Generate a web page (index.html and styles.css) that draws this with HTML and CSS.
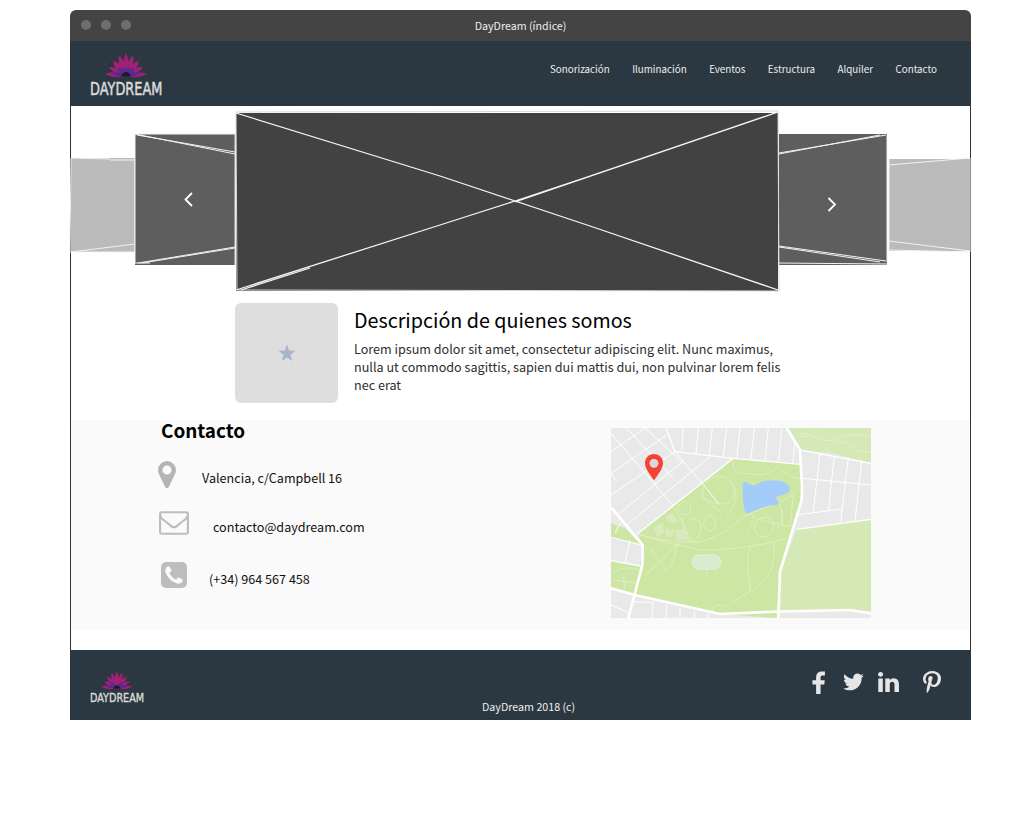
FILE: index.html
```html
<!DOCTYPE html>
<html lang="es">
<head>
<meta charset="utf-8">
<title>DayDream (índice)</title>
<link rel="stylesheet" href="styles.css">
</head>
<body>
<div class="window">
  <div class="titlebar">
    <div class="dots"><span class="dot"></span><span class="dot"></span><span class="dot"></span></div>
    <div class="title">DayDream (índice)</div>
  </div>
  <header class="navbar">
    <svg class="logo" viewBox="0 0 75 56" width="75" height="56">
      <g fill="#3a2a55"><circle cx="36" cy="3" r=".6"/><circle cx="27" cy="8" r=".6"/><circle cx="46" cy="8" r=".6"/><circle cx="16" cy="15" r=".6"/><circle cx="57" cy="14" r=".6"/><circle cx="10" cy="21" r=".6"/><circle cx="62" cy="20" r=".6"/><circle cx="13" cy="9" r=".5"/><circle cx="52" cy="6" r=".5"/><circle cx="20" cy="4" r=".4"/><circle cx="40" cy="1" r=".5"/></g>
      <g fill="#8c2a66"><circle cx="7" cy="20" r=".6"/><circle cx="66" cy="19" r=".6"/><circle cx="15" cy="19" r=".6"/><circle cx="58" cy="18" r=".6"/><circle cx="20" cy="12" r=".6"/><circle cx="51" cy="11" r=".6"/><circle cx="3" cy="21" r=".5"/><circle cx="70" cy="21" r=".5"/></g>
      <g fill="#a41f76">
        <path transform="translate(36 31) rotate(-84)" d="M0 0C-3-8-3-15 0-21C3-15 3-8 0 0Z"/>
        <path transform="translate(36 31) rotate(84)" d="M0 0C-3-8-3-15 0-21C3-15 3-8 0 0Z"/>
        <path transform="translate(36 31) rotate(-62)" d="M0 0C-3-8-3-15 0-19C3-15 3-8 0 0Z"/>
        <path transform="translate(36 31) rotate(62)" d="M0 0C-3-8-3-15 0-19C3-15 3-8 0 0Z"/>
        <path transform="translate(36 31) rotate(-40)" d="M0 0C-3.500-8-3.500-15 0-20C3.500-15 3.500-8 0 0Z"/>
        <path transform="translate(36 31) rotate(40)" d="M0 0C-3.500-8-3.500-15 0-20C3.500-15 3.500-8 0 0Z"/>
        <path transform="translate(36 31) rotate(-19)" d="M0 0C-3.500-8-3.500-15 0-22C3.500-15 3.500-8 0 0Z"/>
        <path transform="translate(36 31) rotate(19)" d="M0 0C-3.500-8-3.500-15 0-22C3.500-15 3.500-8 0 0Z"/>
        <path transform="translate(36 31)" d="M0 0C-3.500-8-3.500-15 0-23C3.500-15 3.500-8 0 0Z"/>
      </g>
      <g fill="#5b2a8c">
        <path transform="translate(36 31) rotate(-76)" d="M0 0C-3-5-3-10 0-16C3-10 3-5 0 0Z"/>
        <path transform="translate(36 31) rotate(76)" d="M0 0C-3-5-3-10 0-16C3-10 3-5 0 0Z"/>
        <path transform="translate(36 31) rotate(-45)" d="M0 0C-3-5-3-8 0-12C3-8 3-5 0 0Z"/>
        <path transform="translate(36 31) rotate(45)" d="M0 0C-3-5-3-8 0-12C3-8 3-5 0 0Z"/>
        <path transform="translate(36 31) rotate(-15)" d="M0 0C-2.500-4-2.500-7 0-10C2.500-7 2.500-4 0 0Z"/>
        <path transform="translate(36 31) rotate(15)" d="M0 0C-2.500-4-2.500-7 0-10C2.500-7 2.500-4 0 0Z"/>
      </g>
      <path fill="#1d1a2b" d="M31 31.500C32 28.500 34 27 36 27C38 27 40 28.500 41 31.500Z"/>
      <text class="logo-text" transform="translate(0 49.500) scale(.76 1)">DAYDREAM</text>
    </svg>
    <nav class="menu">
      <a class="menu-item">Sonorización</a>
      <a class="menu-item">Iluminación</a>
      <a class="menu-item">Eventos</a>
      <a class="menu-item">Estructura</a>
      <a class="menu-item">Alquiler</a>
      <a class="menu-item">Contacto</a>
    </nav>
  </header>
  <main class="content">
    <svg class="carousel" viewBox="71 106 899 190" width="899" height="190">
      <rect x="71" y="158" width="64" height="94" fill="#bbbbbb"/>
      <path class="sketch" d="M71 158L110 159M110 160L135 160M71 158L70 252L135 252M71 252L135 244M135 160L135 252"/>
      <rect x="135" y="134" width="100" height="131" fill="#5e5e5e"/>
      <path class="sketch" d="M135 134L135 263L150 263M135 134L235 134M137 135L235 152M135 134L235 154M138 263L235 247M142 263L235 248"/>
      <rect x="779" y="134" width="108" height="131" fill="#5e5e5e"/>
      <path class="sketch" d="M887 135L887 262M779 263L887 264M779 153L886 135M779 154L880 135M779 246L886 261M779 247L880 262"/>
      <rect x="889" y="159" width="81" height="92" fill="#bbbbbb"/>
      <path class="sketch" d="M889 165L970 158M889 241L970 251M889 159L889 250L970 252M971 158L971 252"/>
      <rect x="236" y="113" width="542" height="178" fill="#424242"/>
      <path class="frame" d="M236 112L778 111L779 291L237 290ZM235 134L235 265"/>
      <path class="cross" d="M236 113L440 176L590 226L778 290M236 290L440 225L515 201L590 176L778 112M241 290L310 268M515 202L772 114"/>
      <path class="chevron" d="M192 193L185.500 199.500L192 206"/>
      <path class="chevron" d="M828.500 198L835 204.500L828.500 211"/>
    </svg>
    <section class="about">
      <div class="thumb">
        <svg viewBox="0 0 18 18" width="18" height="18"><path fill="#a9b4cc" d="M9 .5L11.200 6.500L17.500 6.800L12.500 10.700L14.300 17L9 13.400L3.700 17L5.500 10.700L.5 6.800L6.800 6.500Z"/></svg>
      </div>
      <div class="about-text">
        <h2 class="about-title">Descripción de quienes somos</h2>
        <p class="about-body">Lorem ipsum dolor sit amet, consectetur adipiscing elit. Nunc maximus, nulla ut commodo sagittis, sapien dui mattis dui, non pulvinar lorem felis nec erat</p>
      </div>
    </section>
    <section class="contact">
      <div class="contact-info">
        <h2 class="contact-title">Contacto</h2>
        <div class="row row-place">
          <svg class="icon" viewBox="384 128 1024 1536" width="18" height="27"><path fill="#b5b5b5" d="M1152 640q0-106-75-181t-181-75-181 75-75 181 75 181 181 75 181-75 75-181zm256 0q0 109-33 179l-364 774q-16 33-47.500 52t-67.500 19-67.500-19-46.500-52l-365-774q-33-70-33-179 0-212 150-362t362-150 362 150 150 362z"/></svg>
          <span class="row-text">Valencia, c/Campbell 16</span>
        </div>
        <div class="row row-mail">
          <svg class="icon" viewBox="0 256 1792 1408" width="30" height="24"><path fill="#bdbdbd" d="M1664 1504v-768q-32 36-69 66-268 206-426 338-51 43-83 67t-86.500 48.500-102.500 24.500h-2q-48 0-102.500-24.500t-86.500-48.500-83-67q-158-132-426-338-37-30-69-66v768q0 13 9.500 22.500t22.500 9.500h1472q13 0 22.500-9.500t9.500-22.500zm0-1051v-24.500l-.5-13-3-12.500-5.500-9-9-7.500-14-2.500h-1472q-13 0-22.500 9.500t-9.500 22.500q0 168 147 284 193 152 401 317 6 5 35 29.500t46 37.500 44.500 31.500 50.500 27.500 43 9h2q20 0 43-9t50.500-27.500 44.500-31.500 46-37.500 35-29.500q208-165 401-317 54-43 100.500-115.500t46.500-131.500zm128-37v1088q0 66-47 113t-113 47h-1472q-66 0-113-47t-47-113v-1088q0-66 47-113t113-47h1472q66 0 113 47t47 113z"/></svg>
          <span class="row-text">contacto@daydream.com</span>
        </div>
        <div class="row row-phone">
          <svg class="icon" viewBox="128 128 1536 1536" width="26" height="26"><path fill="#bdbdbd" d="M1408 1193q0-11-2-16t-18-16.500-40.500-25-47.500-26.500-45.500-25-28.500-15q-5-3-19-13t-25-15-21-5q-15 0-36.500 20.500t-39.500 45-38.500 45-33.500 20.500q-7 0-16.500-3.500t-15.500-6.500-17-9.500-14-8.500q-99-55-170-126.500t-127-170.500q-2-3-8.500-14t-9.500-17-6.500-15.500-3.500-16.500q0-13 20.500-33.500t45-38.500 45-39.500 20.500-36.500q0-10-5-21t-15-25-13-19q-3-6-15-28.500t-25-45.500-26.500-47.500-25-40.500-16.500-18-16-2q-48 0-101 22-46 21-80 94.500t-34 130.500q0 16 2.500 34t5 30.500 9 33 10 29.500 12.500 33 11 30q60 164 216.500 320.500t320.500 216.500q6 2 30 11t33 12.500 29.500 10 33 9 30.500 5 34 2.500q57 0 130.500-34t94.500-80q22-53 22-101zm256-777v960q0 119-84.500 203.500t-203.500 84.500h-960q-119 0-203.500-84.500t-84.500-203.500v-960q0-119 84.500-203.500t203.500-84.500h960q119 0 203.500 84.500t84.500 203.500z"/></svg>
          <span class="row-text">(+34) 964 567 458</span>
        </div>
      </div>
      <svg class="map" viewBox="33 24 780 570" width="260" height="190">
        <rect x="33" y="24" width="780" height="570" fill="#e9e9e9"/>
        <path fill="#cde6a3" d="M403 115L600 133L606 240L540 455L530 594L360 582L105 525L130 375L112 342Z"/>
        <path fill="#d5e9b6" d="M590 328L813 298V575L540 572L540 460Z"/>
        <path fill="#d5e9b6" d="M565 24H813V130L700 100L605 90Z"/>
        <path fill="#cde6a3" d="M33 310L75 325L125 375L33 350ZM33 422L122 438L100 525L33 505Z"/>
        <g class="road-thin">
          <path d="M250 24L245 95M295 24L288 100M337 24L327 110M380 24L370 108M420 24L410 113M463 24L452 122M505 24L495 126M545 30L535 128M585 70L578 130"/>
          <path d="M660 100L640 275M703 108L685 272M745 112L722 305M785 120L765 302"/>
          <path d="M610 175L813 195"/>
          <path d="M590 285L725 267"/>
          <path d="M33 95L135 24M33 160L200 45M33 225L225 95M52 285L248 125M80 315L330 110"/>
          <path d="M80 24L220 175M135 24L250 130M33 40L220 258M33 160L50 185"/>
          <path d="M225 95L315 200L355 250"/>
          <path d="M90 360L75 430M33 352L125 375M45 340L60 310"/>
          <path d="M160 545L155 594M200 555L198 594M240 565L240 594M283 573L283 594M325 580V594M33 555L90 580M95 545L160 548"/>
        </g>
        <g class="park-line">
          <path d="M403 115C390 160 420 160 440 160C480 170 520 160 540 135M540 150C560 160 590 180 600 175"/>
          <path d="M112 342C180 360 240 370 300 365C370 350 400 310 440 285C490 265 540 250 580 225M112 342L210 370L300 390C380 390 480 380 560 355"/>
          <path d="M355 168C390 170 410 200 400 235C380 260 330 255 310 230C300 200 330 170 355 168ZM463 320C465 300 490 285 510 295C525 310 525 335 500 350C480 355 463 340 463 320Z"/>
          <path d="M320 290C340 275 350 300 345 320C335 345 310 330 310 310ZM250 245C275 240 280 270 260 285C230 285 225 255 250 245ZM265 300C300 280 320 330 280 365"/>
          <path d="M440 340C460 300 470 280 450 285M520 365C530 420 515 470 460 510C420 530 410 540 395 545M450 385C435 430 450 480 450 510M235 370C220 410 220 440 200 450M135 465C180 430 210 390 235 370M150 385L200 452M320 450V470"/>
          <path d="M335 575C340 555 350 552 378 558M580 225L570 320M540 250C550 290 550 310 530 325M225 265L275 365M245 290L265 360"/>
          <path d="M600 40C640 40 660 70 700 60C740 40 780 40 813 50M650 24C640 50 610 60 590 40M680 90C680 65 720 60 740 70C760 90 790 100 813 95"/>
          <path d="M40 460C60 440 90 440 120 450M40 480L110 490M70 470L75 510"/>
          <path d="M400 200C420 230 400 270 380 285M345 260L365 280M300 225L345 265M460 290C500 310 540 310 570 320M545 270L548 320"/>
        </g>
        <path fill="#a3ccfb" d="M428 190C432 178 445 190 460 197C480 190 490 178 515 182C540 180 565 185 570 210C565 225 545 222 528 232C530 242 545 250 530 255C500 255 465 270 445 280C430 280 428 250 428 190Z"/>
        <path fill="#dbead2" stroke="#eef4e2" stroke-width="2" d="M300 405H340C370 405 370 448 340 448H300C268 448 268 405 300 405Z"/>
        <path fill="#d9eabf" d="M160 325L188 308L192 340L172 352ZM196 292L216 280L236 305L210 310ZM196 325L224 330L215 352L196 345ZM228 330L256 325L260 362L226 360Z"/>
        <g class="road-main">
          <path d="M560 24L600 90L606 200L605 240L540 455L535 594"/>
          <path d="M600 90L813 130" class="road-mid"/>
          <path d="M225 95L400 115L600 133" class="road-mid"/>
          <path d="M198 24L225 95" class="road-mid"/>
          <path d="M33 262L128 375L127 435L85 594"/>
          <path d="M33 505L105 525L360 582L530 575L750 570L813 580"/>
          <path d="M112 342L400 115" class="road-mid"/>
          <path d="M590 328L813 298" class="road-mid"/>
          <path d="M33 422L122 438" class="road-mid"/>
        </g>
        <path fill="#f44336" fill-rule="evenodd" d="M162 102C146 102 135 114 135 130C135 145 150 165 162 181C174 165 189 145 189 130C189 114 178 102 162 102ZM162 118C169 118 175 123 175 130C175 137 169 142 162 142C155 142 149 137 149 130C149 123 155 118 162 118Z"/>
        <circle cx="162" cy="130" r="13" fill="#d8d8d8"/>
      </svg>
    </section>
  </main>
  <footer class="footer">
    <svg class="logo-small" viewBox="0 0 75 56" width="56" height="42">
      <g fill="#a41f76">
        <path transform="translate(36 31) rotate(-84)" d="M0 0C-3-8-3-15 0-21C3-15 3-8 0 0Z"/>
        <path transform="translate(36 31) rotate(84)" d="M0 0C-3-8-3-15 0-21C3-15 3-8 0 0Z"/>
        <path transform="translate(36 31) rotate(-62)" d="M0 0C-3-8-3-15 0-19C3-15 3-8 0 0Z"/>
        <path transform="translate(36 31) rotate(62)" d="M0 0C-3-8-3-15 0-19C3-15 3-8 0 0Z"/>
        <path transform="translate(36 31) rotate(-40)" d="M0 0C-3.500-8-3.500-15 0-20C3.500-15 3.500-8 0 0Z"/>
        <path transform="translate(36 31) rotate(40)" d="M0 0C-3.500-8-3.500-15 0-20C3.500-15 3.500-8 0 0Z"/>
        <path transform="translate(36 31) rotate(-19)" d="M0 0C-3.500-8-3.500-15 0-22C3.500-15 3.500-8 0 0Z"/>
        <path transform="translate(36 31) rotate(19)" d="M0 0C-3.500-8-3.500-15 0-22C3.500-15 3.500-8 0 0Z"/>
        <path transform="translate(36 31)" d="M0 0C-3.500-8-3.500-15 0-23C3.500-15 3.500-8 0 0Z"/>
      </g>
      <g fill="#5b2a8c">
        <path transform="translate(36 31) rotate(-76)" d="M0 0C-3-5-3-10 0-16C3-10 3-5 0 0Z"/>
        <path transform="translate(36 31) rotate(76)" d="M0 0C-3-5-3-10 0-16C3-10 3-5 0 0Z"/>
        <path transform="translate(36 31) rotate(-45)" d="M0 0C-3-5-3-8 0-12C3-8 3-5 0 0Z"/>
        <path transform="translate(36 31) rotate(45)" d="M0 0C-3-5-3-8 0-12C3-8 3-5 0 0Z"/>
      </g>
      <path fill="#1d1a2b" d="M31 31.500C32 28.500 34 27 36 27C38 27 40 28.500 41 31.500Z"/>
      <text class="logo-text" transform="translate(0 49.500) scale(.76 1)">DAYDREAM</text>
    </svg>
    <div class="copyright">DayDream 2018 (c)</div>
    <div class="social">
      <svg class="social-f" viewBox="448 0 900 1536" width="13" height="23"><path d="M1343 12v264h-157q-86 0-116 36t-30 108v189h293l-39 296h-254v759h-306v-759h-255v-296h255v-218q0-186 104-288.500t277-102.500q147 0 228 12z"/></svg>
      <svg class="social-t" viewBox="100 250 1600 1300" width="21" height="18"><path d="M1684 408q-67 98-162 167 1 14 1 42 0 130-38 259.500t-115.500 248.500-184.500 210.500-258 146-323 54.500q-271 0-496-145 35 4 78 4 225 0 401-138-105-2-188-64.500t-114-159.500q33 5 61 5 43 0 85-11-112-23-185.500-111.500t-73.500-205.500v-4q68 38 146 41-66-44-105-115t-39-154q0-88 44-163 121 149 294.500 238.500t371.500 99.500q-8-38-8-74 0-134 94.500-228.500t228.500-94.500q140 0 236 102 109-21 205-78-37 115-142 178 92-10 184-50z"/></svg>
      <svg class="social-in" viewBox="128 148 1536 1468" width="21" height="20"><path d="M477 625v991h-330v-991h330zm21-306q1 73-50.500 122t-135.500 49h-2q-82 0-132-49t-50-122q0-74 51.500-122.500t134.500-48.500 133 48.500 51 122.500zm1166 729v568h-329v-530q0-105-40.500-164.500t-126.500-59.500q-63 0-105.500 34.500t-63.500 85.500q-11 30-11 81v553h-329q2-399 2-647t-1-296l-1-48h329v144h-2q20-32 41-56t56.500-52 87-43.500 114.500-15.500q171 0 275 113.500t104 332.500z"/></svg>
      <svg class="social-p" viewBox="256 0 1280 1664" width="18" height="22" preserveAspectRatio="none"><path d="M256 597q0-108 37.500-203.500t103.500-166.500 152-123 185-78 202-26q158 0 294 66.500t221 193.500 85 287q0 96-19 188t-60 177-100 149.500-145 103-189 38.500q-68 0-135-32t-96-88q-10 39-28 112.500t-23.500 95-20.500 71-26 71-32 62.500-46 77.500-62 86.500l-14 5-9-10q-15-157-15-188 0-92 21.500-206.500t66.500-287.500 52-203q-32-65-32-169 0-83 52-156t132-73q61 0 95 40.500t34 102.500q0 66-44 191t-44 187q0 63 45 104.500t109 41.500q55 0 102-25t78.500-68 56-95 38-110.500 20-111 6.500-99.500q0-173-109.500-269.500t-285.500-96.500q-200 0-334 129.500t-134 328.500q0 44 12.500 85t27 65 27 45.500 12.500 30.500q0 28-15 73t-37 45q-2 0-17-3-51-15-90.500-56t-61-94.500-32.500-108-11-106.500z"/></svg>
    </div>
  </footer>
</div>
</body>
</html>
```

FILE: styles.css
```css
* { box-sizing: border-box; }
html, body { margin: 0; padding: 0; background: #fff; }
body {
  padding: 10px 0 0 70px;
  font-family: "Noto Sans CJK SC", "Noto Sans", sans-serif;
  color: #000;
}
.window { width: 901px; }
.titlebar {
  position: relative;
  height: 31px;
  background: #444444;
  border-radius: 6px 6px 0 0;
  display: flex;
  align-items: center;
  justify-content: center;
}
.dots {
  position: absolute;
  left: 11px;
  top: 10px;
  display: flex;
  gap: 10px;
}
.dot { width: 10px; height: 10px; border-radius: 50%; background: #6e6e6e; }
.title { font-size: 10.700px; line-height: 16px; color: #eeeeee; }
.navbar {
  height: 65px;
  background: #2c3841;
  display: flex;
  align-items: flex-start;
  justify-content: space-between;
  padding: 4px 34px 0 20px;
}
.logo { display: block; overflow: visible; }
.logo-text {
  font-family: "DejaVu Sans", sans-serif;
  font-size: 17px;
  font-weight: 400;
  fill: #dcdcdc;
  stroke: #dcdcdc;
  stroke-width: .5px;
}
.menu { display: flex; gap: 22.500px; padding-top: 16px; }
.menu-item { font-size: 9.800px; line-height: 16px; color: #eeeeee; }
.content {
  border-left: 1px solid #333;
  border-right: 1px solid #333;
  background: #fff;
  padding-bottom: 20px;
}
.carousel { display: block; overflow: visible; }
.sketch { fill: none; stroke: #f2f2f2; stroke-width: 1; }
.cross { fill: none; stroke: #f5f5f5; stroke-width: 1.300; }
.frame { fill: none; stroke: #d9d9d9; stroke-width: 1; }
.chevron { fill: none; stroke: #fff; stroke-width: 1.800; }
.about {
  display: flex;
  height: 124px;
  padding: 7px 0 0 164px;
}
.thumb {
  width: 103px;
  height: 100px;
  border-radius: 6px;
  background: #dedede;
  display: flex;
  align-items: center;
  justify-content: center;
}
.about-text { margin-left: 16px; width: 430px; }
.about-title {
  margin: 0;
  font-size: 19.700px;
  line-height: 34px;
  font-weight: 400;
}
.about-body {
  margin: 3px 0 0;
  font-size: 12.600px;
  line-height: 18px;
  color: #2e2e2e;
}
.contact {
  height: 210px;
  background: #fafafa;
  display: flex;
  justify-content: space-between;
  padding: 8px 99px 0 87px;
}
.contact-info { display: flex; flex-direction: column; }
.contact-title {
  margin: -9px 0 0 3px;
  font-size: 18.900px;
  line-height: 22px;
  font-weight: 700;
}
.row { display: flex; align-items: center; font-size: 12.600px; line-height: 18px; color: #111; }
.icon { display: block; flex: none; }
.row-place { margin-top: 20px; }
.row-place .row-text { margin-left: 26px; position: relative; top: 3px; }
.row-mail { margin-top: 23px; margin-left: 1px; }
.row-mail .row-text { margin-left: 24px; position: relative; top: 4px; }
.row-phone { margin-top: 27px; margin-left: 3px; }
.row-phone .row-text { margin-left: 22px; position: relative; top: 4px; }
.map { display: block; }
.road-thin { fill: none; stroke: #fff; stroke-width: 3; }
.park-line { fill: none; stroke: #e6f1d2; stroke-width: 2; }
.road-main { fill: none; stroke: #fff; stroke-width: 8; }
.road-main .road-mid { stroke-width: 4; }
.footer {
  height: 70px;
  background: #2c3841;
  display: flex;
  align-items: flex-start;
  padding: 15px 30px 0 20px;
}
.logo-small { display: block; flex: none; overflow: visible; }
.copyright {
  margin: 34px 0 0 336px;
  font-size: 10.700px;
  line-height: 16px;
  color: #eeeeee;
  white-space: nowrap;
}
.social {
  margin: 2px 0 0 auto;
  display: flex;
  align-items: center;
  height: 30px;
  fill: #e6e6e6;
}
.social svg { display: block; }
.social-t { margin-left: 18px; }
.social-in { margin-left: 14px; }
.social-p { margin-left: 24px; }
```
